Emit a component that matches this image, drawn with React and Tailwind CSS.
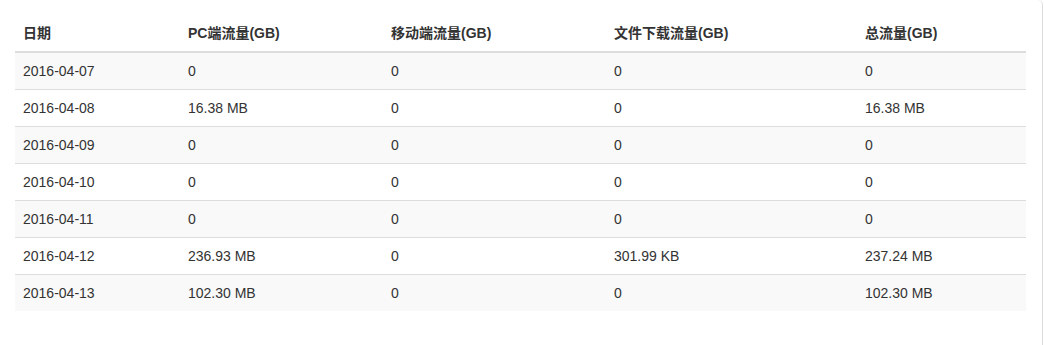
import React from "react";

const rows = [
  ["2016-04-07", "0", "0", "0", "0"],
  ["2016-04-08", "16.38 MB", "0", "0", "16.38 MB"],
  ["2016-04-09", "0", "0", "0", "0"],
  ["2016-04-10", "0", "0", "0", "0"],
  ["2016-04-11", "0", "0", "0", "0"],
  ["2016-04-12", "236.93 MB", "0", "301.99 KB", "237.24 MB"],
  ["2016-04-13", "102.30 MB", "0", "0", "102.30 MB"],
];

const headers = ["日期", "PC端流量(GB)", "移动端流量(GB)", "文件下载流量(GB)", "总流量(GB)"];
const widths = ["w-[165px]", "w-[203px]", "w-[223px]", "w-[251px]", "w-[169px]"];

export default function App() {
  return (
    <div
      className="w-[1044px] h-[345px] bg-white overflow-hidden"
      style={{ fontFamily: '"Liberation Sans", Arial, "Noto Sans CJK SC", sans-serif' }}
    >
      <div className="w-[1043px] h-[360px] border-r border-[#dcdcdc] rounded-tr-[5px] rounded-br-[5px] p-[15px]">
        <table className="w-[1011px] table-fixed border-collapse text-[14px] leading-[20px] text-[#333]">
          <colgroup>
            {widths.map((w, i) => (
              <col key={i} className={w} />
            ))}
          </colgroup>
          <thead>
            <tr>
              {headers.map((h) => (
                <th
                  key={h}
                  className="text-left font-bold px-[8px] pt-[8px] pb-[8px] border-b-2 border-[#ddd] align-bottom"
                >
                  {h}
                </th>
              ))}
            </tr>
          </thead>
          <tbody>
            {rows.map((r, i) => (
              <tr key={i} className={i % 2 === 0 ? "bg-[#f9f9f9]" : "bg-white"}>
                {r.map((c, j) => (
                  <td
                    key={j}
                    className={
                      "px-[8px] py-[8px] align-top " + (i === 0 ? "" : "border-t border-[#ddd]")
                    }
                  >
                    {c}
                  </td>
                ))}
              </tr>
            ))}
          </tbody>
        </table>
      </div>
    </div>
  );
}
